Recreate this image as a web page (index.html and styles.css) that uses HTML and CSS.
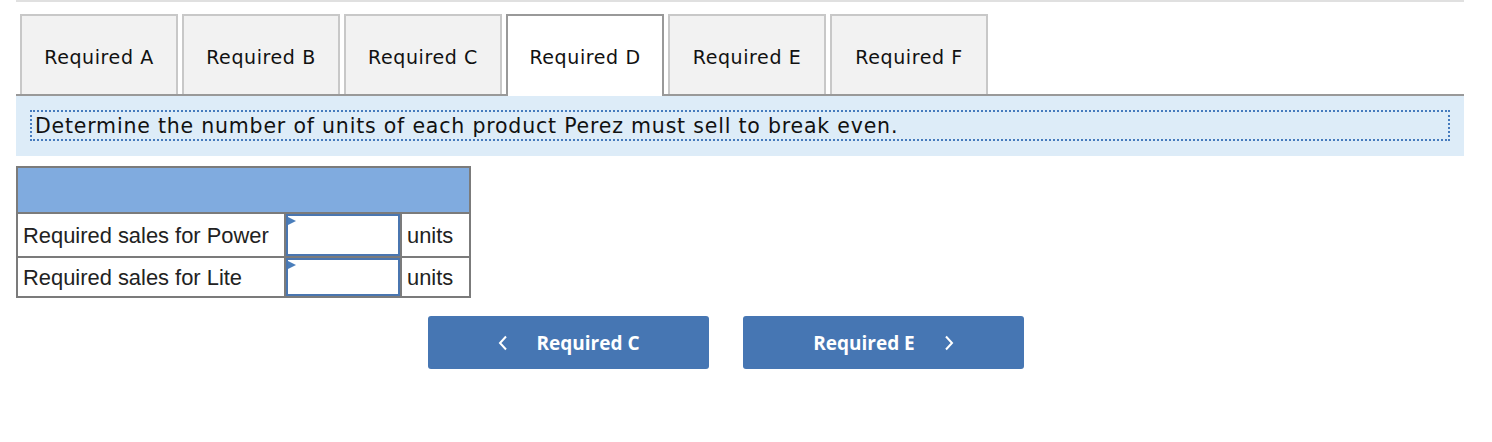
FILE: index.html
```
<!DOCTYPE html>
<html>
<head>
<meta charset="utf-8">
<link rel="stylesheet" href="styles.css">
</head>
<body>
<div class="page">
  <div class="topline"></div>
  <div class="tabs">
    <div class="tab">Required A</div>
    <div class="tab">Required B</div>
    <div class="tab">Required C</div>
    <div class="tab active">Required D</div>
    <div class="tab">Required E</div>
    <div class="tab">Required F</div>
  </div>
  <div class="prompt">
    <div class="prompt-box">Determine the number of units of each product Perez must sell to break even.</div>
  </div>
  <div class="grid">
    <div class="head"></div>
    <div class="cell label">Required sales for Power</div>
    <div class="cell inp"><div class="field"></div></div>
    <div class="cell unit">units</div>
    <div class="cell label">Required sales for Lite</div>
    <div class="cell inp"><div class="field"></div></div>
    <div class="cell unit">units</div>
  </div>
  <div class="nav">
    <button class="btn prev"><svg class="chev" width="10" height="16" viewBox="0 0 10 16"><polyline points="8,1.5 2,8 8,14.5" fill="none" stroke="#fff" stroke-width="2"/></svg><span>Required C</span></button>
    <button class="btn next"><span>Required E</span><svg class="chev" width="10" height="16" viewBox="0 0 10 16"><polyline points="2,1.5 8,8 2,14.5" fill="none" stroke="#fff" stroke-width="2"/></svg></button>
  </div>
</div>
</body>
</html>
```
FILE: styles.css
```
body {
  margin: 0;
  background: #fff;
}
.page {
  margin-left: 16px;
  width: 1448px;
}
.topline {
  height: 2px;
  background: #e0e0e0;
}
.tabs {
  display: flex;
  align-items: flex-start;
  gap: 4px;
  padding-left: 4px;
  margin-top: 12px;
  height: 80px;
  border-bottom: 2px solid #999;
}
.tab {
  box-sizing: border-box;
  width: 158px;
  height: 80px;
  border: 2px solid #c8c8c8;
  border-bottom: none;
  background: #f2f2f2;
  display: flex;
  align-items: center;
  justify-content: center;
  padding-top: 4px;
  font-family: "DejaVu Sans", Verdana, sans-serif;
  font-size: 19px;
  letter-spacing: 0.6px;
  color: #111;
}
.tab.active {
  background: #fff;
  border-color: #999;
  height: 82px;
  padding-bottom: 2px;
}
.prompt {
  background: #ddecf8;
  padding: 14px 14px 15px;
}
.prompt-box {
  border: 2px dotted #467bbd;
  padding: 2px 3px 0;
  line-height: 25px;
  font-family: "DejaVu Sans", Verdana, sans-serif;
  font-size: 20.5px;
  letter-spacing: 0.8px;
  color: #111;
}
.grid {
  margin-top: 10px;
  display: grid;
  grid-template-columns: 266px 114px 67px;
  grid-template-rows: 44px 42px 38px;
  gap: 2px;
  padding: 2px;
  width: max-content;
  background: #7b7b7b;
  font-family: "Liberation Sans", Arial, sans-serif;
  font-size: 21.9px;
  color: #222;
}
.head {
  grid-column: 1 / span 3;
  background: #80abdf;
}
.cell {
  background: #fff;
  display: flex;
  align-items: center;
  padding-top: 1px;
}
.label, .unit {
  padding-left: 5px;
}
.inp {
  padding-top: 0;
}
.field {
  position: relative;
  box-sizing: border-box;
  width: 100%;
  height: 100%;
  border: 2px solid #4a76b0;
  background: #fff;
}
.field::before {
  content: "";
  position: absolute;
  left: 0;
  top: 1px;
  border-left: 8px solid #4a7ebb;
  border-top: 4px solid transparent;
  border-bottom: 4px solid transparent;
}
.nav {
  display: flex;
  gap: 34px;
  margin-top: 18px;
  padding-left: 412px;
}
.btn {
  width: 281px;
  height: 53px;
  border: none;
  border-radius: 3px;
  background: #4676b3;
  color: #fff;
  display: flex;
  align-items: center;
  justify-content: center;
  gap: 29px;
  font-family: "Open Sans", "Liberation Sans", sans-serif;
  font-weight: 700;
  font-size: 19px;
  padding: 0;
}
.chev {
  display: block;
}
```
